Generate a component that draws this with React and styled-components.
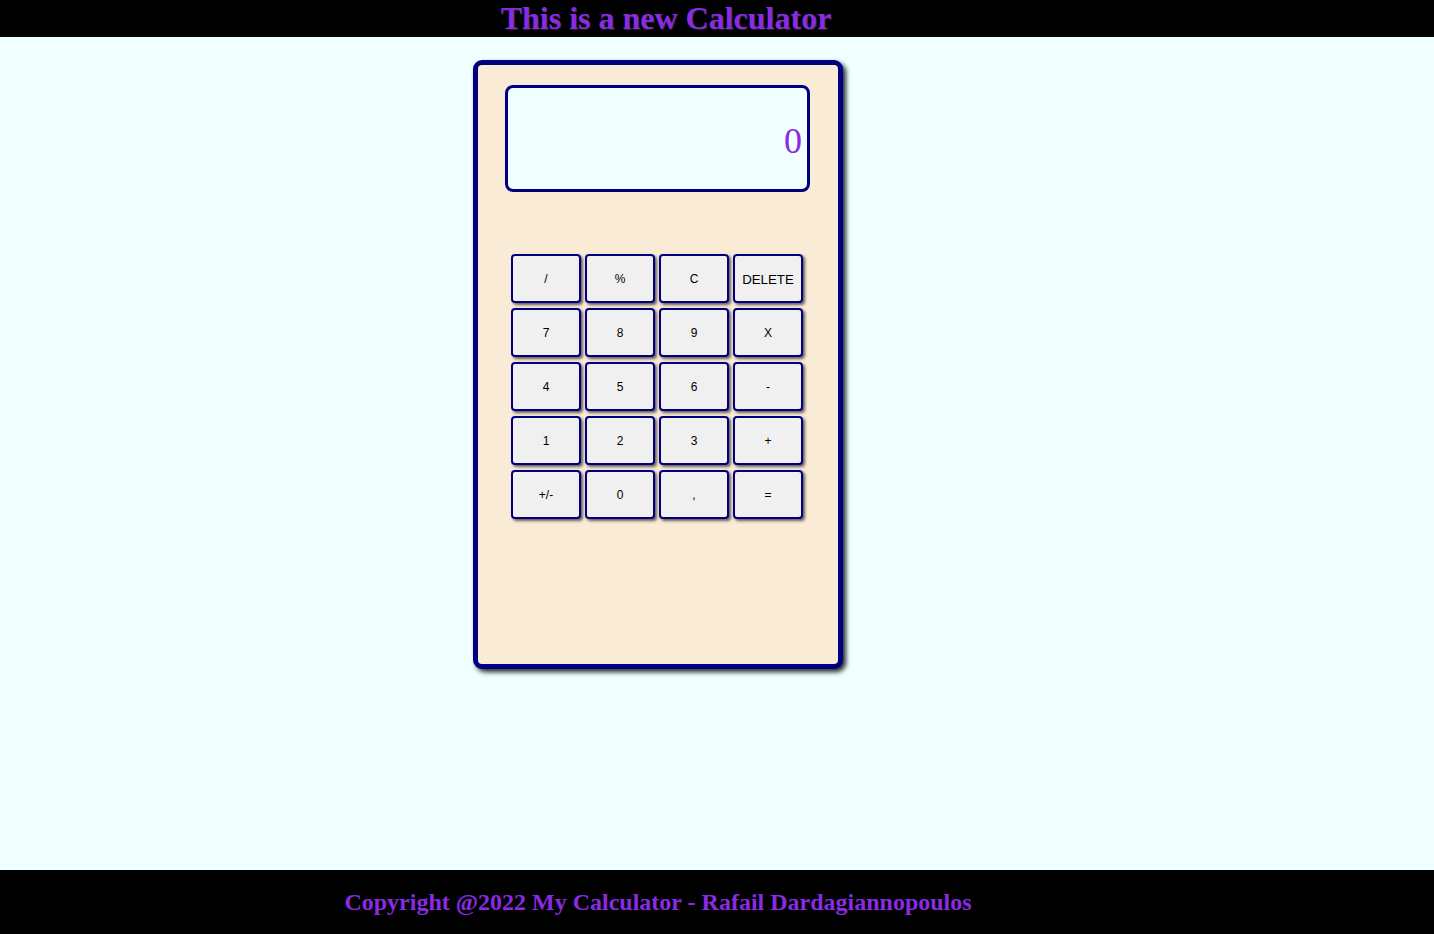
import React, { useState } from "react";
import styled, { createGlobalStyle } from "styled-components";

const GlobalStyle = createGlobalStyle`
  html, body {
    margin: 0;
    padding: 0;
    background: #f0ffff;
    font-family: "Liberation Serif", "Times New Roman", serif;
  }
`;

const Page = styled.div`
  min-height: 100vh;
  display: flex;
  flex-direction: column;
`;

const Header = styled.header`
  background: #000;
  height: 37px;
  display: flex;
`;

const Title = styled.h1`
  width: 1318px;
  margin: 0;
  padding-left: 14px;
  box-sizing: border-box;
  text-align: center;
  font-size: 32px;
  line-height: 37px;
  font-weight: bold;
  color: #8a2be2;
  text-shadow: 1px 1px 1px #222;
`;

const Main = styled.main`
  flex: 1;
  width: 1316px;
  display: flex;
  justify-content: center;
  align-items: flex-start;
  padding-top: 23px;
`;

const Calculator = styled.div`
  width: 360px;
  height: 579px;
  background: #faebd7;
  border: 5px solid #000080;
  border-radius: 9px;
  box-shadow: 3px 3px 5px rgba(0, 0, 0, 0.85);
  display: flex;
  flex-direction: column;
  align-items: center;
  padding-top: 20px;
  box-sizing: content-box;
`;

const Display = styled.div`
  width: 294px;
  height: 97px;
  margin-left: -1px;
  border: 3px solid #000080;
  border-radius: 8px;
  background: #f0ffff;
  color: #8a2be2;
  font-size: 36px;
  display: flex;
  align-items: center;
  justify-content: flex-end;
  padding: 4px 5px 0 0;
  box-sizing: content-box;
`;

const Keys = styled.div`
  margin-top: 62px;
  margin-left: -2px;
  display: grid;
  grid-template-columns: repeat(4, 70px);
  grid-auto-rows: 49px;
  column-gap: 4px;
  row-gap: 5px;
`;

const Key = styled.button`
  box-sizing: border-box;
  border: 2px solid #000080;
  border-radius: 4px;
  background: #f0f0f0;
  box-shadow: 2px 2px 3px rgba(0, 0, 0, 0.6);
  font-family: "Liberation Sans", Arial, sans-serif;
  font-size: ${(props) => (props.wide ? "13.3px" : "12px")};
  color: #000;
  padding: 1px 0 0;
  cursor: pointer;
`;

const Footer = styled.footer`
  background: #000;
  height: 64px;
  display: flex;
  align-items: center;
`;

const Copy = styled.h2`
  width: 1316px;
  margin: 0;
  text-align: center;
  font-size: 24px;
  font-weight: bold;
  color: #8a2be2;
`;

const keys = [
  "/", "%", "C", "DELETE",
  "7", "8", "9", "X",
  "4", "5", "6", "-",
  "1", "2", "3", "+",
  "+/-", "0", ",", "=",
];

export default function App() {
  const [value] = useState("0");
  return (
    <Page>
      <GlobalStyle />
      <Header>
        <Title>This is a new Calculator</Title>
      </Header>
      <Main>
        <Calculator>
          <Display>{value}</Display>
          <Keys>
            {keys.map((k) => (
              <Key key={k} wide={k === "DELETE" ? 1 : 0}>
                {k}
              </Key>
            ))}
          </Keys>
        </Calculator>
      </Main>
      <Footer>
        <Copy>Copyright @2022 My Calculator - Rafail Dardagiannopoulos</Copy>
      </Footer>
    </Page>
  );
}
